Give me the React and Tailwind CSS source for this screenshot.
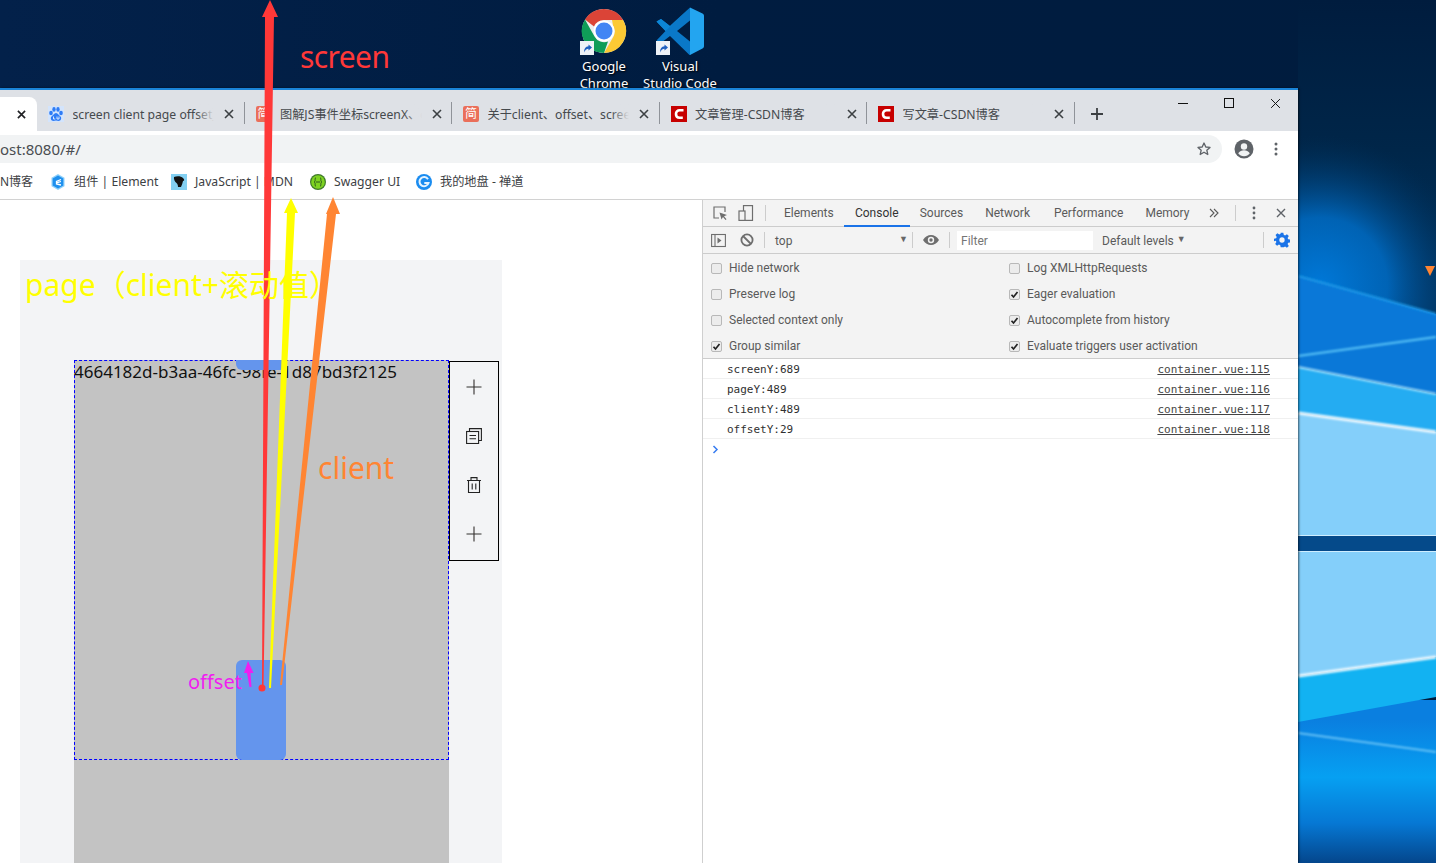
const ui = { fontFamily: '"Noto Sans", "Noto Sans CJK SC", sans-serif' };
const devFont = { fontFamily: 'Roboto, "Noto Sans", sans-serif' };

const tabs = [
  { title: "screen client page offset_", icon: "baidu" },
  { title: "图解JS事件坐标screenX、c", icon: "jian" },
  { title: "关于client、offset、scree", icon: "jian" },
  { title: "文章管理-CSDN博客", icon: "csdn" },
  { title: "写文章-CSDN博客", icon: "csdn" },
];

const settingsRows = [
  ["Hide network", false, "Log XMLHttpRequests", false],
  ["Preserve log", false, "Eager evaluation", true],
  ["Selected context only", false, "Autocomplete from history", true],
  ["Group similar", true, "Evaluate triggers user activation", true],
];

const logs = [
  ["screenY:689", "container.vue:115"],
  ["pageY:489", "container.vue:116"],
  ["clientY:489", "container.vue:117"],
  ["offsetY:29", "container.vue:118"],
];

const Wallpaper = () => (
  <svg className="absolute inset-0" width="1436" height="863" viewBox="0 0 1436 863">
    <defs>
      <linearGradient id="wpTop" x1="0" y1="0" x2="1" y2="0">
        <stop offset="0" stopColor="#03214a" />
        <stop offset="0.5" stopColor="#001c40" />
        <stop offset="1" stopColor="#001c3e" />
      </linearGradient>
      <linearGradient id="wpFade" x1="0" y1="0" x2="0" y2="300" gradientUnits="userSpaceOnUse">
        <stop offset="0" stopColor="#001c3e" />
        <stop offset="0.5" stopColor="#002649" />
        <stop offset="1" stopColor="#01335f" />
      </linearGradient>
      <radialGradient id="wpGlow" cx="1320" cy="285" r="150" gradientUnits="userSpaceOnUse">
        <stop offset="0" stopColor="#0078d8" />
        <stop offset="0.45" stopColor="#0070cc" stopOpacity="0.8" />
        <stop offset="1" stopColor="#01335f" stopOpacity="0" />
      </radialGradient>
      <linearGradient id="wpBottom" x1="0" y1="720" x2="0" y2="863" gradientUnits="userSpaceOnUse">
        <stop offset="0" stopColor="#0a7fe0" />
        <stop offset="0.4" stopColor="#06a0f2" />
        <stop offset="0.72" stopColor="#0678d4" />
        <stop offset="1" stopColor="#04468c" />
      </linearGradient>
      <filter id="soft"><feGaussianBlur stdDeviation="1" /></filter>
    </defs>
    <rect width="1436" height="863" fill="url(#wpTop)" />
    <rect x="1298" width="138" height="400" fill="url(#wpFade)" />
    <rect x="1298" y="88" width="138" height="320" fill="url(#wpGlow)" />
    <polygon points="1298,276 1436,314 1436,394 1298,367" fill="#0a78d8" />
    <polygon points="1298,367 1436,394 1436,432 1298,413" fill="#24acf2" />
    <polygon points="1298,413 1436,432 1436,657 1298,676" fill="#84cffa" />
    <rect x="1298" y="700" width="138" height="163" fill="url(#wpBottom)" />
    <polygon points="1298,676 1436,657 1436,697 1298,722" fill="#12b2f2" />
    <rect x="1298" y="536" width="138" height="15" fill="#054a8a" />
    <g filter="url(#soft)" fill="none">
      <line x1="1298" y1="276" x2="1436" y2="314" stroke="#1f9ae8" strokeWidth="2" />
      <line x1="1298" y1="356" x2="1436" y2="337" stroke="#5cc6f8" strokeWidth="2" />
      <line x1="1298" y1="367" x2="1436" y2="394" stroke="#a5e0fb" strokeWidth="2" />
      <line x1="1298" y1="413" x2="1436" y2="432" stroke="#f0faff" strokeWidth="3" />
      <line x1="1298" y1="676" x2="1436" y2="657" stroke="#f0faff" strokeWidth="3" />
      <line x1="1298" y1="733" x2="1436" y2="752" stroke="#7fd0fa" strokeWidth="1.5" />
    </g>
    <rect x="1298" y="535" width="138" height="1" fill="#cfeeff" />
    <rect x="1298" y="551" width="138" height="1" fill="#cfeeff" />
    <polygon points="1425,266 1435,266 1430,276" fill="#ff8533" />
  </svg>
);

const ShortcutBadge = () => (
  <svg className="absolute left-0 bottom-0" width="14" height="14" viewBox="0 0 14 14">
    <rect width="14" height="14" fill="#eef2f7" />
    <path d="M4 11.500c0-4 1.500-6 4.500-6.200V3.400L12 6.600 8.500 9.600V7.700C6.500 7.800 5 9 4 11.500z" fill="#1f5fbf" />
  </svg>
);

const ChromeLogo = () => (
  <svg width="46" height="46" viewBox="0 0 46 46">
    <circle cx="23" cy="23" r="22" fill="#eee" />
    <path d="M23 1A22 22 0 0 1 42.100 12H23a11 11 0 0 0-10 6.500L4 11.500A22 22 0 0 1 23 1z" fill="#db4437" />
    <path d="M42.100 12A22 22 0 0 1 23 45l9.500-16.500A11 11 0 0 0 32 17.500L31 12z" fill="#fcc934" />
    <path d="M4 11.500L13.500 28.500A11 11 0 0 0 27 33.500L23 45A22 22 0 0 1 4 11.500z" fill="#0f9d58" />
    <circle cx="23" cy="23" r="10.500" fill="#fff" />
    <circle cx="23" cy="23" r="8.500" fill="#4285f4" />
  </svg>
);

const VsCodeLogo = () => (
  <svg width="48" height="48" viewBox="0 0 48 48">
    <path d="M34 .5L14 19 5 12 .5 14.500 9.500 24 .5 33.500 5 36l9-7 20 19.500 2-9V9z" fill="#0a78c8" />
    <path d="M34 .5L14 19 5 12 .5 14.500 9.500 24 34 .5z" fill="#0c86d6" />
    <path d="M34 13.500L21 24l13 10.500z" fill="#001c40" />
    <path d="M34 .5l12.500 6c1 .5 1.500 1.200 1.500 2.500v30c0 1.300-.5 2-1.500 2.500L34 48z" fill="#23a5f0" />
  </svg>
);

const DesktopIcon = ({ children, lines }) => (
  <div className="flex flex-col items-center w-[48px]">
    <div className="relative w-[48px] h-[48px] flex items-center justify-center">
      {children}
      <ShortcutBadge />
    </div>
    <div className="mt-[3px] text-center text-white text-[13px] leading-[17px] [text-shadow:1px_1px_2px_#000]">
      {lines.map((l) => (
        <div key={l} className="whitespace-nowrap">{l}</div>
      ))}
    </div>
  </div>
);

const Favicon = ({ type }) => {
  if (type === "baidu") {
    return (
      <svg width="16" height="16" viewBox="0 0 16 16" className="shrink-0">
        <rect width="16" height="16" fill="#d3e4fc" />
        <g fill="#2e7cf6">
          <ellipse cx="3" cy="7" rx="1.800" ry="2.300" />
          <ellipse cx="6" cy="3.400" rx="1.700" ry="2.300" />
          <ellipse cx="10" cy="3.400" rx="1.700" ry="2.300" />
          <ellipse cx="13" cy="7" rx="1.800" ry="2.300" />
          <path d="M8 7c-2 0-3 2.500-4.500 3.500C2 12 3 15 5.500 15c1 0 1.500-.4 2.500-.4s1.500.4 2.500.4c2.500 0 3.500-3 2-4.500C11 9.500 10 7 8 7z" />
        </g>
        <path d="M5.500 10.500v2.500h1.800M9 10.500v2.500h2v-2.500" fill="none" stroke="#fff" strokeWidth=".8" />
      </svg>
    );
  }
  if (type === "jian") {
    return (
      <div className="w-[16px] h-[16px] shrink-0 rounded-[2px] bg-[#ea6f5a] text-white text-[12px] leading-[16px] text-center overflow-hidden">简</div>
    );
  }
  return (
    <svg width="16" height="16" viewBox="0 0 16 16" className="shrink-0">
      <rect width="16" height="16" fill="#c70000" />
      <path d="M12.500 4.200H8.600C6.400 4.200 5 5.800 5 8s1.400 3.800 3.600 3.800h3.200" fill="none" stroke="#fff" strokeWidth="2.600" />
    </svg>
  );
};

const XIcon = ({ size = 10, color = "#3c4043", width = 1.6 }) => (
  <svg width={size} height={size} viewBox="0 0 10 10" className="shrink-0">
    <path d="M1 1l8 8M9 1L1 9" stroke={color} strokeWidth={width} />
  </svg>
);

const Tab = ({ title, icon }) => (
  <div className="w-[207.500px] shrink-0 h-full flex items-center pl-[11px] relative">
    <Favicon type={icon} />
    <div className="relative ml-[8.500px] w-[141.500px] pt-[2px] overflow-hidden whitespace-nowrap text-[12.200px] text-[#45494d]">
      {title}
      <div className="absolute right-0 top-0 bottom-0 w-[18px] bg-gradient-to-r from-[#dee1e600] to-[#dee1e6]" />
    </div>
    <div className="ml-[10px] w-[10px] flex"><XIcon /></div>
    <div className="absolute right-0 top-[5px] bottom-[7px] w-px bg-[#8f9399]" />
  </div>
);

const Bookmark = ({ icon, label, className }) => (
  <div className={`flex items-center gap-[8px] text-[12.200px] text-[#3c4043] whitespace-nowrap ${className}`}>
    {icon}
    <span>{label}</span>
  </div>
);

const TitleBar = () => (
  <div className="h-[43px] shrink-0 bg-[#dee1e6] border-t-2 border-[#1a84d8] flex">
    <div className="flex flex-1 pt-[7px]">
      <div className="w-[37px] h-full bg-white rounded-tr-[8px] flex items-center justify-end pr-[11px] shrink-0">
        <XIcon size={9} color="#202124" width={1.8} />
      </div>
      {tabs.map((t) => (
        <Tab key={t.title} title={t.title} icon={t.icon} />
      ))}
      <div className="ml-[16px] flex items-center">
        <svg width="12" height="12" viewBox="0 0 12 12">
          <path d="M6 0v12M0 6h12" stroke="#3c4043" strokeWidth="1.800" />
        </svg>
      </div>
    </div>
    <div className="w-[138px] flex items-start justify-between pt-[8px] pl-[18px] pr-[17px] shrink-0">
      <svg width="10" height="10" viewBox="0 0 10 10"><path d="M0 5.500h10" stroke="#111" /></svg>
      <svg width="10" height="10" viewBox="0 0 10 10"><rect x=".5" y=".5" width="9" height="9" fill="none" stroke="#111" /></svg>
      <XIcon size={11} color="#111" width={0.9} />
    </div>
  </div>
);

const AddressBar = () => (
  <div className="h-[32px] shrink-0 bg-white flex items-end relative">
    <div className="h-[28px] w-[1222px] bg-[#f1f3f4] rounded-r-[14px] flex items-center justify-between pr-[10px]">
      <span className="text-[15px] text-[#4a4d51] whitespace-nowrap">ost:8080/#/</span>
      <svg width="16" height="16" viewBox="0 0 24 24" fill="none" stroke="#5f6368" strokeWidth="2" strokeLinejoin="round">
        <path d="M12 3l2.700 6 6.300.6-4.800 4.200 1.500 6.400L12 16.800l-5.700 3.400 1.500-6.400L3 9.600 9.300 9z" />
      </svg>
    </div>
    <div className="flex items-center h-[28px] ml-[12px] gap-[22px]">
      <svg width="20" height="20" viewBox="0 0 20 20">
        <circle cx="10" cy="10" r="9.500" fill="#5f6368" />
        <circle cx="10" cy="7.500" r="3.200" fill="#f1f3f4" />
        <path d="M4.200 14.200c1.300-2 3.500-3 5.800-3s4.500 1 5.800 3c-1.300 1.900-3.400 3-5.800 3s-4.500-1.100-5.800-3z" fill="#f1f3f4" />
      </svg>
      <svg width="4" height="14" viewBox="0 0 4 14" className="-ml-[2px]">
        <circle cx="2" cy="2" r="1.500" fill="#5f6368" />
        <circle cx="2" cy="7" r="1.500" fill="#5f6368" />
        <circle cx="2" cy="12" r="1.500" fill="#5f6368" />
      </svg>
    </div>
  </div>
);

const BookmarksBar = () => (
  <div className="h-[37px] shrink-0 bg-white border-b border-[#d2d2d2] flex items-center pt-[2px]">
    <span className="text-[12px] text-[#3c4043] w-[50px] shrink-0">N博客</span>
    <Bookmark
      className="w-[121px] shrink-0"
      label="组件 | Element"
      icon={
        <svg width="16" height="16" viewBox="0 0 16 16">
          <path d="M8 0l6.500 3.800v8.400L8 16l-6.500-3.800V3.800z" fill="#8fd0fa" />
          <path d="M8 1.500l5.300 3v7L8 14.500l-5.300-3v-7z" fill="#1e90ee" />
          <path d="M11 5.500L6.500 7.500v2.500L11 11M6.500 8.800L11 7.500" fill="none" stroke="#fff" strokeWidth="1.300" />
        </svg>
      }
    />
    <Bookmark
      className="w-[139px] shrink-0"
      label="JavaScript | MDN"
      icon={
        <svg width="16" height="16" viewBox="0 0 16 16">
          <rect width="16" height="16" fill="#83d0f2" />
          <path d="M3 3c3-1 7-1 9 1 2 2 1 3 0 3-.5 2-1 4-2 6H7c0-2-.5-3-1.500-4C4 8 2.500 5 3 3z" fill="#111" />
        </svg>
      }
    />
    <Bookmark
      className="w-[106px] shrink-0"
      label="Swagger UI"
      icon={
        <svg width="16" height="16" viewBox="0 0 16 16">
          <circle cx="8" cy="8" r="8" fill="#3f7a2a" />
          <circle cx="8" cy="8" r="6.800" fill="#7ed321" />
          <path d="M6 3.500C4.500 4 5.500 6.500 5 7.300c-.3.500-1 .7-1 .7s.7.200 1 .7c.5.800-.5 3.300 1 3.800M10 3.500c1.500.5.500 3 1 3.800.3.500 1 .7 1 .7s-.7.200-1 .7c-.5.800.5 3.300-1 3.800M6 8h4" fill="none" stroke="#2c5a1e" />
        </svg>
      }
    />
    <Bookmark
      label="我的地盘 - 禅道"
      icon={
        <svg width="16" height="16" viewBox="0 0 16 16">
          <circle cx="8" cy="8" r="8" fill="#1a8cf0" />
          <path d="M12 5.200A4.600 4.600 0 1 0 12.500 9H8.300" fill="none" stroke="#e4f3ff" strokeWidth="2" />
        </svg>
      }
    />
  </div>
);

const Plus = () => (
  <svg width="16" height="16" viewBox="0 0 16 16">
    <path d="M8 .5v15M.5 8h15" stroke="#33302f" strokeWidth="1.100" />
  </svg>
);

const PageArea = () => (
  <div className="w-[702px] shrink-0 pt-[60px] pl-[20px] bg-white flex">
    <div className="w-[482px] bg-[#f3f4f6] pt-[100px] pl-[54px] flex items-start h-[663px]">
      <div className="w-[375px] h-full bg-[#c3c3c3]">
        <div className="relative h-[400px] border border-dashed border-[#0000ff] flex flex-col">
          <div className="relative text-[17px] leading-[20px] pt-[1px] text-[#111] whitespace-nowrap -ml-px">
            4664182d-b3aa-46fc-98fe-1d87bd3f2125
          </div>
          <div className="absolute -top-px left-[161px] w-[50px] h-[10px] bg-[#6495ed] rounded-b-[6px]" />
          <div className="mt-auto ml-[161px] w-[50px] h-[100px] -mb-px bg-[#6495ed] rounded-[6px]" />
        </div>
      </div>
      <div className="w-[50px] h-[200px] mt-[1px] border border-black flex flex-col items-center justify-around pb-[1px]">
        <Plus />
        <svg width="16" height="16" viewBox="0 0 16 16" fill="none" stroke="#222" strokeWidth="1.100">
          <rect x=".6" y="3.500" width="12" height="12" />
          <path d="M3.500 3.500V.6H15.400V12.500H12.600M3.500 7.500h6.500M3.500 10.800h6.500" />
        </svg>
        <svg width="16" height="16" viewBox="0 0 16 16" fill="none" stroke="#222" strokeWidth="1.100">
          <path d="M1 3.500h14M5 3.500V.6h6v2.900M2.500 3.500v12h11v-12M6.200 6.500v6M9.800 6.500v6" />
        </svg>
        <Plus />
      </div>
    </div>
  </div>
);

const Checkbox = ({ checked }) => (
  <div className="w-[11px] h-[11px] shrink-0 rounded-[2px] border border-[#b8b8b8] bg-[#ececec] flex items-center justify-center">
    {checked && (
      <svg width="9" height="9" viewBox="0 0 9 9">
        <path d="M1.500 4.800l2 2.200 4-5" fill="none" stroke="#222" strokeWidth="1.700" />
      </svg>
    )}
  </div>
);

const SettingItem = ({ label, checked }) => (
  <div className="flex items-center gap-[7px] text-[12px] text-[#5a5a5a] whitespace-nowrap">
    <Checkbox checked={checked} />
    <span>{label}</span>
  </div>
);

const Sep = ({ className }) => <div className={`w-px h-[16px] bg-[#ccc] shrink-0 ${className}`} />;

const DevTools = () => (
  <div className="flex-1 border-l border-[#cfcfcf] bg-white flex flex-col min-w-0">
    <div className="h-[27px] shrink-0 bg-[#f3f3f3] border-b border-[#ccc] flex items-center text-[12px] text-[#5a5a5a]" style={devFont}>
      <svg width="16" height="16" viewBox="0 0 16 16" className="ml-[9px]" fill="none" stroke="#6e6e6e" strokeWidth="1.200">
        <path d="M7 13H2V2h11v5" />
        <path d="M7.500 7.500L15 10l-3 1.200 2.500 3-1 .8-2.500-3-1.500 2.500z" fill="#6e6e6e" stroke="none" />
      </svg>
      <svg width="16" height="16" viewBox="0 0 16 16" className="ml-[10px]" fill="none" stroke="#6e6e6e" strokeWidth="1.200">
        <rect x="5.500" y=".6" width="9" height="14.800" />
        <rect x="1" y="6" width="6" height="9.400" fill="#f3f3f3" />
      </svg>
      <Sep className="ml-[11px]" />
      <span className="ml-[18px]">Elements</span>
      <div className="ml-[10px] w-[66px] h-full flex items-center justify-center text-[#333] border-b-2 border-[#1a73e8] -mb-px">Console</div>
      <span className="ml-[10px]">Sources</span>
      <span className="ml-[22px]">Network</span>
      <span className="ml-[24px]">Performance</span>
      <span className="ml-[22px]">Memory</span>
      <svg width="10" height="10" viewBox="0 0 10 10" className="ml-[20px]" fill="none" stroke="#5a5a5a" strokeWidth="1.100">
        <path d="M1 1l4 4-4 4M5 1l4 4-4 4" />
      </svg>
      <Sep className="ml-[16px]" />
      <svg width="4" height="14" viewBox="0 0 4 14" className="ml-[16px]">
        <circle cx="2" cy="2" r="1.400" fill="#5f6368" />
        <circle cx="2" cy="7" r="1.400" fill="#5f6368" />
        <circle cx="2" cy="12" r="1.400" fill="#5f6368" />
      </svg>
      <div className="ml-[20px]"><XIcon size={10} color="#5f6368" width={1.400} /></div>
    </div>
    <div className="h-[27px] shrink-0 bg-[#f3f3f3] border-b border-[#ccc] flex items-center text-[12px] text-[#5a5a5a] pr-[8px]" style={devFont}>
      <svg width="15" height="15" viewBox="0 0 15 15" className="ml-[8px]" fill="none" stroke="#6e6e6e" strokeWidth="1.100">
        <rect x=".6" y="1.500" width="13.800" height="12" />
        <path d="M4 1.500v12" />
        <path d="M6.500 4.500l4 3-4 3z" fill="#6e6e6e" stroke="none" />
      </svg>
      <svg width="14" height="14" viewBox="0 0 14 14" className="ml-[14px]" fill="none" stroke="#6e6e6e" strokeWidth="1.800">
        <circle cx="7" cy="7" r="5.600" />
        <path d="M3 3l8 8" />
      </svg>
      <Sep className="ml-[10px]" />
      <span className="ml-[10px] w-[124px] pt-[1px]">top</span>
      <span className="text-[9px] text-[#666] w-[13px]">▼</span>
      <Sep />
      <svg width="16" height="12" viewBox="0 0 16 12" className="ml-[10px]">
        <path d="M0 6c2-3.500 5-5 8-5s6 1.500 8 5c-2 3.500-5 5-8 5S2 9.500 0 6z" fill="#6e6e6e" />
        <circle cx="8" cy="6" r="3.200" fill="#f3f3f3" />
        <circle cx="8" cy="6" r="1.700" fill="#6e6e6e" />
      </svg>
      <Sep className="ml-[10px]" />
      <div className="ml-[7px] w-[136px] h-[19px] bg-white text-[#757575] pl-[4px] leading-[21px]">Filter</div>
      <span className="ml-[9px] pt-[1px]">Default levels</span>
      <span className="ml-[3px] text-[9px] text-[#666]">▼</span>
      <Sep className="ml-auto" />
      <svg width="16" height="16" viewBox="0 0 24 24" className="ml-[10px]">
        <path d="M10 1h4l.6 3.200 2 .9 2.800-1.800 2.800 2.800-1.800 2.800.9 2 3.200.6v4l-3.200.6-.9 2 1.800 2.800-2.800 2.800-2.800-1.800-2 .9L14 23h-4l-.6-3.200-2-.9-2.800 1.800-2.800-2.800 1.800-2.800-.9-2L0 14v-4l3.200-.6.900-2L2.300 4.600l2.800-2.800 2.800 1.800 2-.9z" fill="#1a73e8" />
        <circle cx="12" cy="12" r="4" fill="#f3f3f3" />
      </svg>
    </div>
    <div className="h-[105px] shrink-0 bg-[#f3f3f3] border-b border-[#ccc] grid grid-cols-[298px_1fr] grid-rows-[26px_26px_26px_26px] pl-[8px] pt-[1px]" style={devFont}>
      {settingsRows.map(([a, ac, b, bc]) => [
        <SettingItem key={a} label={a} checked={ac} />,
        <SettingItem key={b} label={b} checked={bc} />,
      ])}
    </div>
    {logs.map(([text, src]) => (
      <div key={text} className="h-[20px] shrink-0 border-b border-[#f0f0f0] flex items-center justify-between pt-[4px] pl-[24px] pr-[28px] text-[11px] text-[#303030]" style={{ fontFamily: '"DejaVu Sans Mono", monospace' }}>
        <span>{text}</span>
        <span className="underline text-[#444]">{src}</span>
      </div>
    ))}
    <div className="pl-[9px] pt-[6px]">
      <svg width="7" height="9" viewBox="0 0 7 9" fill="none" stroke="#367cf1" strokeWidth="1.500">
        <path d="M1.500 1l3.500 3.500-3.500 3.500" />
      </svg>
    </div>
  </div>
);

const Annotations = () => (
  <>
    <svg className="absolute inset-0 pointer-events-none" width="1436" height="863" viewBox="0 0 1436 863">
      <polygon points="270,0 278,17 274,17 263.500,688 262,688 265,17 262,17" fill="#ff3838" />
      <polygon points="291,198 298,213 295,213 271,688 269,688 287,213 284,213" fill="#ffff00" />
      <polygon points="333,197 340,214 336,214 282,685 280,685 327,214 326,214" fill="#ff8533" />
      <polygon points="248,661 253.500,673 250.500,673 251.500,687 249.500,687 247,673 244,673" fill="#f01df0" />
      <circle cx="262" cy="688" r="3.500" fill="#ff3838" />
    </svg>
    <div className="absolute left-[300px] top-[37px] text-[30px] leading-[40px] tracking-[-0.6px] text-[#ff3838] pointer-events-none">screen</div>
    <div className="absolute left-[25px] top-[265px] text-[30px] leading-[40px] text-[#ffff00] whitespace-nowrap pointer-events-none">page（client+滚动值）</div>
    <div className="absolute left-[318px] top-[448px] text-[30px] leading-[40px] text-[#ff8533] pointer-events-none">client</div>
    <div className="absolute left-[188px] top-[668px] text-[20px] leading-[28px] text-[#f01df0] pointer-events-none">offset</div>
  </>
);

export default function App() {
  return (
    <div className="relative w-[1436px] h-[863px] overflow-hidden" style={ui}>
      <Wallpaper />
      <div className="absolute left-[580px] top-[7px] flex gap-[28px]">
        <DesktopIcon lines={["Google", "Chrome"]}>
          <ChromeLogo />
        </DesktopIcon>
        <DesktopIcon lines={["Visual", "Studio Code"]}>
          <VsCodeLogo />
        </DesktopIcon>
      </div>
      <div className="absolute left-0 top-[88px] w-[1298px] h-[775px] flex flex-col bg-white shadow-[1px_0_2px_rgba(0,0,0,0.6)]">
        <TitleBar />
        <AddressBar />
        <BookmarksBar />
        <div className="flex flex-1 min-h-0">
          <PageArea />
          <DevTools />
        </div>
      </div>
      <Annotations />
    </div>
  );
}
